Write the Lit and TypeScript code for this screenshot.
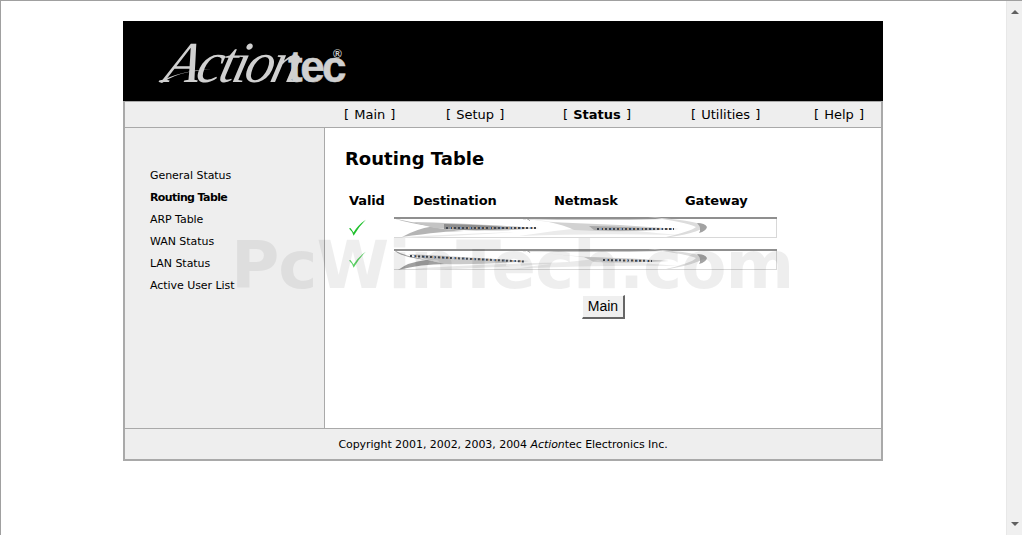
import { LitElement, html, css, svg } from "lit";
import { customElement } from "lit/decorators.js";

const side = ["General Status", "Routing Table", "ARP Table", "WAN Status", "LAN Status", "Active User List"];
const nav = [
  ["Main", 102, false],
  ["Setup", 117, false],
  ["Status", 128, true],
  ["Utilities", 123, false],
  ["Help", 70, false],
] as const;

const check = (dim: boolean) => svg`<svg class="check" width="18" height="19" viewBox="0 0 18 19" opacity=${dim ? 0.72 : 1}><path d="M0 9.6 L1.4 9 Q3 10.6 4.5 13.6 Q9 6 16.8 .8 Q10 7.4 4.6 16.8 Q3 12 0 9.6Z" fill="#1fc02c"/></svg>`;

const speckle = (d: string) => svg`
  <path d=${d} fill="none" stroke="#3f444d" stroke-width="2" stroke-dasharray="2 2"/>
  <path d=${d} fill="none" stroke="#c9a27a" stroke-width="2" stroke-dasharray="1 7" stroke-dashoffset="2"/>
  <path d=${d} fill="none" stroke="#6f9bd0" stroke-width="2" stroke-dasharray="1 9" stroke-dashoffset="6"/>`;

const ribbonA = svg`<svg class="ribbon" width="384" height="22" viewBox="0 0 384 22">
  <path d="M0 0H126Q132 2 137 4Q133 1 128 0H262Q268 .5 272 2Q267 .5 264 0H383V2H270Q200 3 128 2H0Z" fill="#8f8f8f"/>
  <path d="M0 1.5Q14 6 38 9.5Q22 12 8 20Q50 14 70 14Q36 11 34 8Q16 5 0 1.5Z" fill="#b4b4b4"/>
  <path d="M18 5Q70 6 145 11Q100 16 40 11Q30 8 18 5Z" fill="#c4c4c4"/>
  <path d="M50 7Q95 8 120 11Q90 15 50 12Z" fill="#8e8e8e"/>
  <path d="M8 20Q60 17 125 15Q60 19 10 21Z" fill="#e9e9e9"/>
  <path d="M135 2Q160 7 205 9Q165 13 125 19Q200 16 285 18Q240 14 225 12Q180 8 135 2Z" fill="#ebebeb"/>
  <path d="M155 5Q220 7 285 12Q230 16 180 13Q170 8 155 5Z" fill="#d2d2d2"/>
  <path d="M195 9Q240 10 270 12Q235 15 200 13Z" fill="#a8a8a8"/>
  <path d="M254 0Q300 3 312 9Q303 17 268 21Q298 14 302 10Q292 5 254 0Z" fill="#dcdcdc"/>
  <path d="M303 6Q311 6 313 10Q312 14 305 16Q308 11 303 6Z" fill="#a2a2a2"/>
  ${speckle("M52 11 L142 11")}
  ${speckle("M203 12 L280 12")}
</svg>`;

const ribbonB = svg`<svg class="ribbon" width="384" height="22" viewBox="0 0 384 22">
  <path d="M0 0H125Q132 2 138 4Q133 1 128 0H262Q268 .5 272 2Q267 .5 264 0H383V2H270Q200 3 128 2H0Z" fill="#8f8f8f"/>
  <path d="M0 1Q6 8 32 11Q14 13 4 21Q30 14 60 15Q30 11 20 8Q8 6 0 1Z" fill="#a0a0a0"/>
  <path d="M14 5Q70 8 135 12Q90 16 50 15Q30 10 14 5Z" fill="#cbcbcb"/>
  <path d="M20 20Q80 15 190 13Q90 19 35 21Z" fill="#e8e8e8"/>
  <path d="M135 2Q170 7 215 9Q165 13 120 20Q200 16 285 17Q245 14 230 12Q180 8 135 2Z" fill="#ebebeb"/>
  <path d="M190 8Q240 9 275 12Q235 15 200 13Z" fill="#cdcdcd"/>
  <path d="M254 0Q300 3 312 8Q303 16 268 21Q298 14 302 9Q292 5 254 0Z" fill="#dcdcdc"/>
  <path d="M303 5Q311 5 313 9Q312 13 305 15Q308 10 303 5Z" fill="#a2a2a2"/>
  ${speckle("M16 7 L130 12.5")}
  ${speckle("M209 11 L258 12")}
</svg>`;

@customElement("app-root")
export class AppRoot extends LitElement {
  static styles = css`
    :host {
      display: flex;
      width: 1022px;
      height: 535px;
      box-sizing: border-box;
      border-top: 1px solid #a0a0a0;
      border-left: 1px solid #a0a0a0;
      background: #fff;
      overflow: hidden;
      font-family: "DejaVu Sans", Verdana, sans-serif;
      color: #000;
      position: relative;
    }
    .page { flex: 1; padding: 20px 0 0 122px; min-width: 0; }
    .frame { width: 760px; }
    .head { height: 80px; background: #000; box-sizing: border-box; padding: 12px 0 0 36px; }
    .logo { display: inline-flex; align-items: baseline; position: relative; color: #d0d0d0; height: 60px; line-height: 60px; }
    .act { display: inline-block; font: italic 58px/60px "Liberation Serif", serif; letter-spacing: -3.2px; transform: skewX(-14deg); transform-origin: 0 100%; width: 129px; white-space: nowrap; }
    .tec { font: bold 44px/60px "Liberation Sans", sans-serif; letter-spacing: -2.5px; -webkit-text-stroke: .5px #d0d0d0; }
    .reg { font: bold 12px/12px "Liberation Sans", sans-serif; align-self: flex-start; margin: 15px 0 0 -11px; }
    .swash { position: absolute; left: 0; top: 14px; }
    .box { border: solid #a9a9a9; border-width: 0 2px 2px; }
    .nav {
      height: 27px; box-sizing: border-box;
      background: #eee; border-top: 1px solid #a9a9a9; border-bottom: 1px solid #a9a9a9;
      display: flex; align-items: center; padding-left: 219px;
      font-size: 13px; word-spacing: 1px;
    }
    .nav span { flex: none; white-space: pre; }
    .nav b { font-weight: bold; }
    .mid { display: flex; height: 300px; }
    .side {
      flex: none; background: #eee; border-right: 1px solid #a9a9a9;
      padding: 40px 0 0 25px; box-sizing: border-box; width: 200px;
      font-size: 11px; letter-spacing: -0.05px; display: flex; flex-direction: column;
    }
    .side div { height: 22px; line-height: 16px; white-space: nowrap; }
    .side .on { font-weight: bold; letter-spacing: -0.6px; }
    .main { flex: 1; padding: 20px 0 0 20px; min-width: 0; }
    h1 { margin: 0; font-size: 18px; line-height: 22px; font-weight: bold; }
    .grid { margin-top: 22px; display: grid; grid-template-columns: 49px 383px; row-gap: 11px; width: 432px; }
    .ths { grid-column: 1 / 3; display: grid; grid-template-columns: 64px 141px 131px auto; padding-left: 4px; font-size: 13px; font-weight: bold; line-height: 18px; margin-bottom: -4px; letter-spacing: -0.12px; }
    .cell { height: 21px; display: flex; padding-left: 4px; }
    .check { margin-top: 2px; }
    .field { height: 21px; box-sizing: border-box; border-top: 2px solid #8f8f8f; border-right: 1px solid #d8d8d8; border-bottom: 1px solid #d8d8d8; position: relative; }
    .ribbon { position: absolute; left: 0; top: -2px; }
    .btnrow { display: flex; justify-content: center; margin-top: 25px; width: 517px; }
    button {
      width: 43px; height: 24px; padding: 0 0 1px; font: 14px "Liberation Sans", Arial, sans-serif; color: #000;
      background: #efefef; border: solid; border-color: #fff #666 #666 #fff; border-width: 1px 2px 2px 1px; border-radius: 0;
    }
    .foot {
      height: 31px; box-sizing: border-box; background: #eee; border-top: 1px solid #a9a9a9;
      font-size: 11px; letter-spacing: -0.05px; text-align: center; line-height: 30px; padding-top: 1px;
    }
    .bar { width: 16px; flex: none; background: #f0f0f0; border-left: 1px solid #e8e8e8; box-sizing: border-box; display: flex; flex-direction: column; justify-content: space-between; align-items: center; padding: 9px 0; }
    .bar i { display: block; width: 0; height: 0; border: 4px solid transparent; }
    .up { border-bottom-color: #606060 !important; border-top-width: 0 !important; }
    .down { border-top-color: #606060 !important; border-bottom-width: 0 !important; }
    .mark {
      position: absolute; left: 230px; top: 238px; font-size: 66px; line-height: 54px; font-weight: bold;
      color: rgba(0, 0, 0, 0.065); white-space: nowrap; pointer-events: none; letter-spacing: -1px;
    }
  `;

  render() {
    return html`
      <div class="page">
        <div class="frame">
          <div class="head">
            <div class="logo">
              <svg class="swash" width="60" height="36" viewBox="0 0 60 36"><path d="M0 35Q20 24 52 22L30 25Q14 28 3 36Z" fill="#d0d0d0"/></svg>
              <span class="act">Action</span><span class="tec">tec</span><span class="reg">®</span>
            </div>
          </div>
          <div class="box">
            <div class="nav">
              ${nav.map(([t, w, b]) => html`<span style="width:${w}px">${b ? html`[ <b>${t}</b> ]` : `[ ${t} ]`}</span>`)}
            </div>
            <div class="mid">
              <div class="side">
                ${side.map((s, i) => html`<div class=${i === 1 ? "on" : ""}>${s}</div>`)}
              </div>
              <div class="main">
                <h1>Routing Table</h1>
                <div class="grid">
                  <div class="ths"><span>Valid</span><span>Destination</span><span>Netmask</span><span>Gateway</span></div>
                  <div class="cell">${check(false)}</div><div class="field">${ribbonA}</div>
                  <div class="cell">${check(true)}</div><div class="field">${ribbonB}</div>
                </div>
                <div class="btnrow"><button>Main</button></div>
              </div>
            </div>
            <div class="foot">Copyright 2001, 2002, 2003, 2004 <i>Action</i>tec Electronics Inc.</div>
          </div>
        </div>
      </div>
      <div class="bar"><i class="up"></i><i class="down"></i></div>
      <div class="mark">PcWinTech.com</div>
    `;
  }
}
